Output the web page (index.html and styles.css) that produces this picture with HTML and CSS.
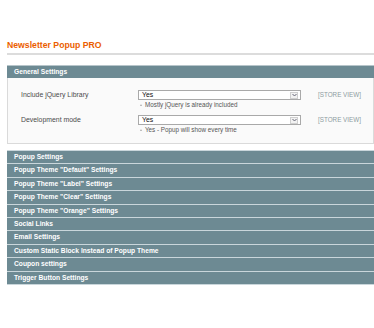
FILE: index.html
```html
<!DOCTYPE html>
<html>
<head>
<meta charset="utf-8">
<link rel="stylesheet" href="styles.css">
</head>
<body>
<div class="page">
  <div class="title-row"><h1 class="title">Newsletter Popup PRO</h1></div>
  <div class="section">
    <div class="head head-first">General Settings</div>
    <div class="fieldset">
      <div class="row">
        <div class="label">Include jQuery Library</div>
        <div class="value">
          <div class="select"><span class="sel-text">Yes</span><span class="sel-arrow"><svg width="5" height="4" viewBox="0 0 5 4"><path d="M0.5 1 L2.5 3 L4.5 1" fill="none" stroke="#667" stroke-width="1"/></svg></span></div>
          <div class="note"><span class="tri"></span>Mostly jQuery is already included</div>
        </div>
        <div class="scope">[STORE VIEW]</div>
      </div>
      <div class="row">
        <div class="label">Development mode</div>
        <div class="value">
          <div class="select"><span class="sel-text">Yes</span><span class="sel-arrow"><svg width="5" height="4" viewBox="0 0 5 4"><path d="M0.5 1 L2.5 3 L4.5 1" fill="none" stroke="#667" stroke-width="1"/></svg></span></div>
          <div class="note"><span class="tri"></span>Yes - Popup will show every time</div>
        </div>
        <div class="scope">[STORE VIEW]</div>
      </div>
    </div>
  </div>
  <div class="bars">
    <div class="head">Popup Settings</div>
    <div class="head">Popup Theme "Default" Settings</div>
    <div class="head">Popup Theme "Label" Settings</div>
    <div class="head">Popup Theme "Clear" Settings</div>
    <div class="head">Popup Theme "Orange" Settings</div>
    <div class="head">Social Links</div>
    <div class="head">Email Settings</div>
    <div class="head">Custom Static Block Instead of Popup Theme</div>
    <div class="head">Coupon settings</div>
    <div class="head">Trigger Button Settings</div>
  </div>
</div>
</body>
</html>
```
FILE: styles.css
```css
html, body {
  margin: 0;
  padding: 0;
  background: #ffffff;
  overflow: hidden;
}
.page {
  margin-left: 7px;
  width: 367px;
  font-family: "Liberation Sans", Arial, sans-serif;
  padding-top: 40px;
}
.title-row {
  border-bottom: 2px solid #dcdcdc;
  padding-bottom: 3px;
}
.title {
  margin: 0;
  font-size: 8.7px;
  line-height: 10px;
  font-weight: bold;
  color: #eb5e00;
}
.section {
  margin-top: 10px;
}
.head {
  box-sizing: border-box;
  height: 13.4px;
  line-height: 12.4px;
  border-top: 1px solid #c9d6db;
  background: #6d8a93;
  color: #ffffff;
  font-weight: bold;
  font-size: 6.7px;
  padding-left: 7px;
  white-space: nowrap;
}
.head-first {
  height: 13px;
  border-top-color: #b7c5ca;
}
.fieldset {
  background: #fafafa;
  border: 1px solid #dadada;
  border-top: none;
  padding: 12px 0 9px 13px;
  display: flex;
  flex-direction: column;
  gap: 6px;
}
.row {
  display: grid;
  grid-template-columns: 117px 163px auto;
  align-items: start;
}
.label {
  font-size: 6.9px;
  line-height: 10px;
  color: #4a4a4a;
}
.scope {
  font-size: 6.3px;
  line-height: 10px;
  color: #8e9ca1;
  margin-left: 17px;
  white-space: nowrap;
}
.select {
  box-sizing: border-box;
  height: 10px;
  border: 1px solid #a9a9a9;
  background: #fff;
  display: flex;
  align-items: center;
  justify-content: space-between;
  padding-left: 3px;
  padding-right: 2px;
}
.sel-text {
  font-size: 6.9px;
  line-height: 8px;
  color: #111;
}
.sel-arrow {
  box-sizing: border-box;
  width: 8px;
  height: 7px;
  border: 1px solid #cfcfcf;
  background: #f2f2f2;
  display: flex;
  align-items: center;
  justify-content: center;
}
.note {
  font-size: 6.3px;
  line-height: 8px;
  color: #555;
  margin-top: 1px;
  display: flex;
  align-items: center;
}
.tri {
  width: 0;
  height: 0;
  border-left: 1.5px solid transparent;
  border-right: 1.5px solid transparent;
  border-bottom: 2.5px solid #aaa;
  margin: 0 3px 0 2px;
}
.bars {
  margin-top: 6px;
  border-bottom: 1px solid #c9d6db;
}
```
